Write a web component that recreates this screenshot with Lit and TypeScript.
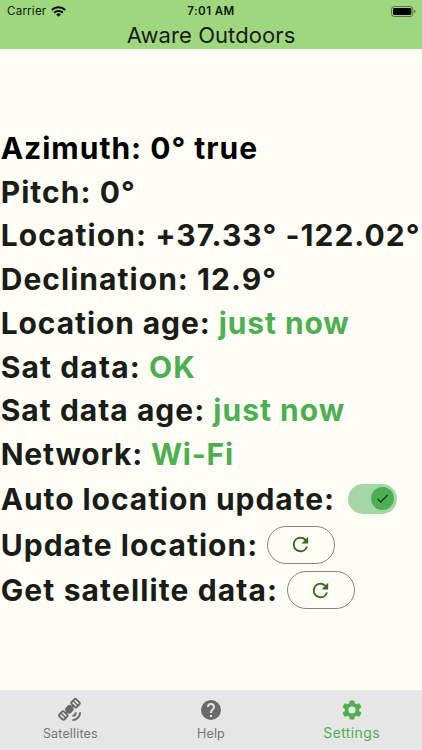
import { LitElement, html, css, svg } from "lit";
import { customElement } from "lit/decorators.js";
import { styleMap } from "lit/directives/style-map.js";

interface Row {
  label: string;
  value?: string;
  kind?: string;
  tracking: number;
}

const readings: Row[] = [
  { label: "Azimuth: 0° true", kind: "strong", tracking: 0.99 },
  { label: "Pitch: 0°", tracking: 1.05 },
  { label: "Location: +37.33° -122.02°", tracking: 1.04 },
  { label: "Declination: 12.9°", tracking: 1.04 },
  { label: "Location age:", value: "just now", tracking: 0.9 },
  { label: "Sat data:", value: "OK", tracking: 1.12 },
  { label: "Sat data age:", value: "just now", tracking: 1.01 },
  { label: "Network:", value: "Wi-Fi", tracking: 0.8 },
];

const spacing = (px: number) => styleMap({ letterSpacing: `${px}px` });

const refresh = svg`<path d="M17.65 6.35A7.96 7.96 0 0 0 12 4a8 8 0 1 0 7.73 10h-2.08A6 6 0 1 1 12 6c1.66 0 3.14.69 4.22 1.78L13 11h7V4z"/>`;
const gear = svg`<path d="M19.14 12.94c.04-.3.06-.61.06-.94 0-.32-.02-.64-.07-.94l2.03-1.58c.18-.14.23-.41.12-.61l-1.92-3.32c-.12-.22-.37-.29-.59-.22l-2.39.96c-.5-.38-1.03-.7-1.62-.94l-.36-2.54c-.04-.24-.24-.41-.48-.41h-3.84c-.24 0-.43.17-.47.41l-.36 2.54c-.59.24-1.13.57-1.62.94l-2.39-.96c-.22-.08-.47 0-.59.22L2.74 8.87c-.12.21-.08.47.12.61l2.03 1.58c-.05.3-.09.63-.09.94s.02.64.07.94l-2.03 1.58c-.18.14-.23.41-.12.61l1.92 3.32c.12.22.37.29.59.22l2.39-.96c.5.38 1.03.7 1.62.94l.36 2.54c.05.24.24.41.48.41h3.84c.24 0 .44-.17.47-.41l.36-2.54c.59-.24 1.13-.56 1.62-.94l2.39.96c.22.08.47 0 .59-.22l1.92-3.32c.12-.22.07-.47-.12-.61zM12 15.6a3.6 3.6 0 1 1 0-7.2 3.6 3.6 0 0 1 0 7.2z"/>`;
const help = svg`<path d="M12 2a10 10 0 1 0 0 20 10 10 0 0 0 0-20zm1 17h-2v-2h2zm2.07-7.75-.9.92C13.45 12.9 13 13.5 13 15h-2v-.5c0-1.1.45-2.1 1.17-2.83l1.24-1.26A2 2 0 1 0 10 9H8a4 4 0 1 1 8 0c0 .88-.36 1.68-.93 2.25z"/>`;
const satellite = svg`
  <g transform="rotate(-45 11 11)">
    <rect x="7.1" y="7.3" width="7.8" height="7.4" rx="2.4" fill="currentColor"/>
    <g fill="none" stroke="currentColor" stroke-width="1.9">
      <rect x="-1" y="7.5" width="6.6" height="7" rx="1.4"/>
      <rect x="16.4" y="7.5" width="6.6" height="7" rx="1.4"/>
      <path d="M2.3 8v6M19.7 8v6M5.6 11h2M14.4 11h2" stroke-width="1.5"/>
    </g>
  </g>
  <path d="M14 17.6a4 4 0 0 0 3.6-3.6M14 21.8a8 8 0 0 0 7.8-7.8" fill="none" stroke="currentColor" stroke-width="1.9"/>`;

@customElement("app-root")
export class AppRoot extends LitElement {
  static styles = css`
    :host {
      display: flex;
      flex-direction: column;
      height: 750px;
      width: 422px;
      overflow: hidden;
      background: #fefdf5;
      color: #1a1c18;
      font-family: Inter, "Liberation Sans", sans-serif;
    }
    svg { display: block; fill: currentColor; }
    header { height: 49px; background: #9fd77f; flex: none; }
    .status {
      display: grid;
      grid-template-columns: 1fr auto 1fr;
      align-items: center;
      height: 22px;
      color: #10180c;
      font-size: 11.6px;
      line-height: 22px;
    }
    .carrier { display: flex; align-items: center; gap: 5px; padding-left: 7px; letter-spacing: 0.2px; }
    .clock { font-weight: 600; letter-spacing: 0.4px; }
    .battery { justify-self: end; padding-right: 6px; }
    h1 {
      margin: 0;
      font-size: 22px;
      line-height: 27px;
      font-weight: 400;
      text-align: center;
      letter-spacing: 0.08px;
    }
    main { flex: 1; padding-top: 77px; }
    .row {
      display: flex;
      align-items: center;
      height: 43.75px;
      padding-left: 0.7px;
      font-size: 30px;
      font-weight: 650;
      white-space: pre;
    }
    .row > span { flex: none; margin-right: -1px; }
    .row.strong { color: #000; }
    .row.control { height: 45.8px; }
    .value { color: #4caf50; }
    .toggle {
      box-sizing: border-box;
      display: flex;
      justify-content: flex-end;
      width: 49px;
      height: 30px;
      margin-left: 6px;
      padding: 3.5px;
      border-radius: 15px;
      background: #a4d7a3;
    }
    .thumb {
      display: grid;
      place-items: center;
      width: 23px;
      height: 23px;
      border-radius: 50%;
      background: #4caf50;
      color: #1a3516;
    }
    .action {
      box-sizing: border-box;
      display: grid;
      place-items: center;
      width: 68px;
      height: 38px;
      margin-left: 1.5px;
      padding: 0;
      border: 1px solid #83857c;
      border-radius: 19px;
      background: none;
      color: #38691c;
    }
    nav {
      display: grid;
      grid-template-columns: repeat(3, 1fr);
      height: 60px;
      flex: none;
      background: #e6e6e6;
      color: #696969;
    }
    .tab { display: flex; flex-direction: column; align-items: center; padding-top: 8px; }
    .tab span { font-size: 12.5px; line-height: 16px; letter-spacing: 0.15px; margin-top: 4px; color: #757575; }
    .tab.active { color: #4caf50; }
    .tab.active span { font-size: 14px; letter-spacing: 0.4px; color: #4caf50; margin-top: 3px; }
  `;

  private action(label: string, tracking: number) {
    return html`<div class="row control"><span style=${spacing(tracking)}>${label} </span>
      <button class="action" aria-label=${label}><svg width="23" height="23" viewBox="0 0 24 24">${refresh}</svg></button></div>`;
  }

  render() {
    return html`
      <header>
        <div class="status">
          <div class="carrier"><span>Carrier</span>
            <svg width="15" height="11" viewBox="0 0 15 11">
              <g fill="none" stroke="#000" stroke-width="2.1"><path d="M.8 4a9.6 9.6 0 0 1 13.4 0M3.2 6.7a6.2 6.2 0 0 1 8.6 0"/></g>
              <path fill="#000" d="M5.2 8.4a3.3 3.3 0 0 1 4.6 0L7.5 10.8z"/>
            </svg>
          </div>
          <div class="clock">7:01 AM</div>
          <svg class="battery" width="25" height="11" viewBox="0 0 25 11">
            <rect x=".5" y=".5" width="21.4" height="10" rx="2.8" fill="none" stroke="#000" stroke-opacity=".45"/>
            <rect x="2" y="2" width="18.4" height="7" rx="1.4" fill="#000"/>
            <path d="M23 3.8v3.4q1.4-.4 1.4-1.7T23 3.8z" fill="#000" fill-opacity=".5"/>
          </svg>
        </div>
        <h1>Aware Outdoors</h1>
      </header>
      <main>
        ${readings.map((r) => html`<div class="row ${r.kind ?? ""}"><span style=${spacing(r.tracking)}>${r.label}${r.value ? html` <span class="value">${r.value}</span>` : ""}</span></div>`)}
        <div class="row control"><span style=${spacing(0.92)}>Auto location update: </span><div class="toggle"><div class="thumb">
          <svg width="15" height="15" viewBox="0 0 24 24"><path d="M9 16.17 4.83 12l-1.42 1.41L9 19 21 7l-1.41-1.41z"/></svg>
        </div></div></div>
        ${this.action("Update location:", 1.04)}
        ${this.action("Get satellite data:", 1.12)}
      </main>
      <nav>
        <div class="tab"><svg width="24" height="24" viewBox="-0.4 -0.3 24 24">${satellite}</svg><span>Satellites</span></div>
        <div class="tab"><svg width="24" height="24" viewBox="0 0 24 24">${help}</svg><span>Help</span></div>
        <div class="tab active"><svg width="24" height="24" viewBox="0 0 24 24">${gear}</svg><span>Settings</span></div>
      </nav>
    `;
  }
}
